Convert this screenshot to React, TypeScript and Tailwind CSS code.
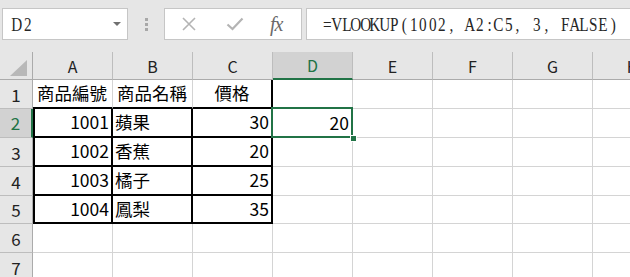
const CELL_FONT = "font-['Noto_Sans_CJK_TC','Noto_Sans',sans-serif]"
const COLS = ['A', 'B', 'C', 'D', 'E', 'F', 'G', 'H']

type Row = { n: number; h: string; a?: string; b?: string; c?: string; d?: string }

const ROWS: Row[] = [
  { n: 1, h: 'h-[29px]', a: '商品編號', b: '商品名稱', c: '價格' },
  { n: 2, h: 'h-[29px]', a: '1001', b: '蘋果', c: '30', d: '20' },
  { n: 3, h: 'h-[29px]', a: '1002', b: '香蕉', c: '20' },
  { n: 4, h: 'h-[29px]', a: '1003', b: '橘子', c: '25' },
  { n: 5, h: 'h-[28px]', a: '1004', b: '鳳梨', c: '35' },
  { n: 6, h: 'h-[29px]' },
  { n: 7, h: 'h-[29px]' },
]

// fixed-pitch serif text, like the MingLiU latin glyphs in the bar
function MonoSerif({ text, cell }: { text: string; cell: string }) {
  return (
    <span className="flex font-['Liberation_Serif','DejaVu_Serif',serif] text-[19px] text-[#262626] leading-none">
      {text.split('').map((ch, i) => (
        <span key={i} className={`${cell} inline-flex justify-center shrink-0`}>
          <span className="inline-block scale-x-[0.8]">{ch === ' ' ? '\u00a0' : ch}</span>
        </span>
      ))}
    </span>
  )
}

function FormulaBar() {
  return (
    <div className="h-[52px] bg-[#e6e6e6] flex items-start pt-[8px] overflow-hidden">
      {/* Name box */}
      <div className="ml-[2px] w-[126px] h-[32px] shrink-0 bg-white border border-[#c6c6c6] flex items-center justify-between pl-[8px] pr-[6px]">
        <MonoSerif text="D2" cell="w-[11px]" />
        <span className="w-0 h-0 border-l-[4px] border-r-[4px] border-t-[4px] border-l-transparent border-r-transparent border-t-[#707070]" />
      </div>
      <div className="w-[36px] h-[32px] shrink-0 flex flex-col items-center justify-center gap-[2px]">
        <span className="w-[3px] h-[3px] bg-[#a8a8a8]" />
        <span className="w-[3px] h-[3px] bg-[#a8a8a8]" />
        <span className="w-[3px] h-[3px] bg-[#a8a8a8]" />
      </div>
      {/* cancel / enter / fx */}
      <div className="w-[138px] h-[32px] shrink-0 bg-white border border-[#c6c6c6] flex items-center">
        <svg className="ml-[17px] shrink-0" width="14" height="14" viewBox="0 0 14 14">
          <path d="M1 1 L13 13 M13 1 L1 13" stroke="#b4b4b4" strokeWidth="1.6" fill="none" />
        </svg>
        <svg className="ml-[30px] shrink-0" width="18" height="14" viewBox="0 0 18 14">
          <path d="M1.5 7.5 L6.5 12 L16.5 1.5" stroke="#b4b4b4" strokeWidth="2.2" fill="none" />
        </svg>
        <span className="ml-[26px] font-['Liberation_Serif',serif] italic text-[20px] text-[#6a6a6a] tracking-[-1px]">
          fx
        </span>
      </div>
      <div className="ml-[4px] w-[340px] h-[32px] shrink-0 bg-white border border-[#c6c6c6] flex items-center pl-[16px]">
        <MonoSerif text="=VLOOKUP(1002, A2:C5, 3, FALSE)" cell="w-[9.5px]" />
      </div>
    </div>
  )
}

function HeaderRow() {
  return (
    <div className={`flex h-[28px] ${CELL_FONT} text-[16px] text-[#222]`}>
      <div className="w-[33px] shrink-0 bg-[#e6e6e6] border-r border-b border-[#ababab] relative">
        <svg className="absolute left-[10px] top-[8px]" width="17" height="16" viewBox="0 0 17 16">
          <polygon points="17,0 17,16 0,16" fill="#b8b8b8" />
        </svg>
      </div>
      {COLS.map((c) =>
        c === 'D' ? (
          <div
            key={c}
            className="w-[80px] shrink-0 bg-[#d2d2d2] border-r border-[#bdbdbd] border-b-2 border-b-[#217346] flex items-center justify-center text-[#217346]"
          >
            {c}
          </div>
        ) : (
          <div
            key={c}
            className="w-[80px] shrink-0 bg-[#e6e6e6] border-r border-r-[#bdbdbd] border-b border-b-[#ababab] flex items-center justify-center"
          >
            {c}
          </div>
        )
      )}
    </div>
  )
}

function DataRow({ row }: { row: Row }) {
  const inTable = row.n >= 2 && row.n <= 5
  const isHead = row.n === 1
  const grid = 'border-r border-b border-[#d4d4d4]'
  const thick = 'border-r-2 border-b-2 border-black'

  return (
    <div className={`flex ${row.h} ${CELL_FONT} text-[17.5px] text-black`}>
      <div
        className={
          row.n === 2
            ? 'w-[33px] shrink-0 bg-[#d2d2d2] border-r-2 border-r-[#217346] border-b border-b-[#bdbdbd] flex items-center justify-center text-[#217346] text-[17px]'
            : 'w-[33px] shrink-0 bg-[#e6e6e6] border-r border-r-[#ababab] border-b border-b-[#bdbdbd] flex items-center justify-center text-[#222] text-[17px] leading-none'
        }
      >
        {row.n}
      </div>

      {/* A */}
      <div
        className={`w-[80px] shrink-0 flex items-center overflow-visible whitespace-nowrap ${
          inTable ? `${thick} border-l-2 justify-end pr-[2px]` : isHead ? 'border-r border-r-[#d4d4d4] border-b-2 border-b-black pl-[4px]' : grid
        }`}
      >
        {row.a}
      </div>
      {/* B */}
      <div
        className={`w-[80px] shrink-0 flex items-center whitespace-nowrap ${
          inTable ? `${thick} pl-[2px]` : isHead ? 'border-r border-r-[#d4d4d4] border-b-2 border-b-black pl-[4px]' : grid
        }`}
      >
        {row.b}
      </div>
      {/* C */}
      <div
        className={`w-[80px] shrink-0 flex items-center whitespace-nowrap ${
          inTable ? `${thick} justify-end pr-[2px]` : isHead ? `${thick} justify-center` : grid
        }`}
      >
        {row.c}
      </div>
      {/* D */}
      <div className={`w-[80px] shrink-0 relative flex items-center justify-end pr-[3px] ${grid} ${row.n === 2 ? 'z-10' : ''}`}>
        {row.d}
        {row.n === 2 && (
          <>
            <div className="absolute -top-[2px] -left-[2px] right-[-1px] bottom-[-1px] border-2 border-[#217346] pointer-events-none" />
            <div className="absolute right-[-5px] bottom-[-5px] w-[7px] h-[7px] bg-[#217346] border border-white" />
          </>
        )}
      </div>
      {['E', 'F', 'G', 'H'].map((c) => (
        <div key={c} className={`w-[80px] shrink-0 ${grid}`} />
      ))}
    </div>
  )
}

export default function App() {
  return (
    <div className="w-[630px] h-[277px] overflow-hidden bg-white">
      <FormulaBar />
      <HeaderRow />
      {ROWS.map((r) => (
        <DataRow key={r.n} row={r} />
      ))}
    </div>
  )
}
